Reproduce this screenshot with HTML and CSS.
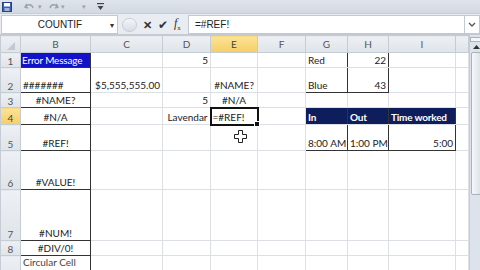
FILE: index.html
```html
<!DOCTYPE html>
<html lang="en">
<head>
    <meta charset="UTF-8">
    <title>Error values</title>
    <link rel="stylesheet" href="styles.css">
</head>
<body>
    <div class="qat">
        <svg class="qicon" width="10" height="10" viewBox="0 0 10 10">
            <rect x="0.5" y="0.5" width="9" height="9" fill="#3a5fb0" stroke="#23408a"/>
            <rect x="2" y="1" width="6" height="3.5" fill="#fff"/>
            <rect x="2.5" y="6" width="5" height="3" fill="#9fb3dc"/>
        </svg>
        <span class="qsep"></span>
        <svg class="qicon dim" width="12" height="10" viewBox="0 0 12 10">
            <path d="M3 2 L1 5 L4 6 M1.5 5 C3 2 8 1.5 9 6" fill="none" stroke="#9aa3ad" stroke-width="1.4"/>
        </svg>
        <span class="qdrop">▾</span>
        <svg class="qicon dim" width="12" height="10" viewBox="0 0 12 10">
            <path d="M9 2 L11 5 L8 6 M10.5 5 C9 2 4 1.5 3 6" fill="none" stroke="#9aa3ad" stroke-width="1.4"/>
        </svg>
        <span class="qdrop">▾</span>
        <span class="qgap"></span>
        <span class="qdrop">▾</span>
        <span class="qcust">
            <svg width="7" height="8" viewBox="0 0 7 8">
                <rect x="0" y="0" width="7" height="1.2" fill="#444"/>
                <path d="M0.5 3 L6.5 3 L3.5 7 Z" fill="#444"/>
            </svg>
        </span>
    </div>

    <div class="fbar">
        <div class="namebox">
            <span class="name">COUNTIF</span>
            <span class="nb-arrow">▾</span>
        </div>
        <div class="fx-tools">
            <span class="grip"></span>
            <span class="tool">✕</span>
            <span class="tool check">✔</span>
            <span class="tool fx"><i>f</i><sub>x</sub></span>
        </div>
        <div class="formula">=#REF!</div>
        <div class="expand">
            <svg width="8" height="6" viewBox="0 0 8 6">
                <path d="M1 1 L4 4 L7 1" fill="none" stroke="#555" stroke-width="1.3"/>
            </svg>
        </div>
    </div>

    <div class="sheet-wrap">
        <table class="sheet">
            <colgroup>
                <col class="c-hdr">
                <col class="c-b">
                <col class="c-c">
                <col class="c-d">
                <col class="c-e">
                <col class="c-f">
                <col class="c-g">
                <col class="c-h">
                <col class="c-i">
                <col class="c-j">
            </colgroup>
            <tr class="r-hdr">
                <th class="corner"><span class="tri"></span></th>
                <th>B</th><th>C</th><th>D</th><th class="active">E</th><th>F</th><th>G</th><th>H</th><th>I</th><th></th>
            </tr>
            <tr class="r1">
                <th>1</th>
                <td class="bx mid title">Error Message</td>
                <td></td>
                <td class="num">5</td>
                <td></td><td></td>
                <td class="tb-l">Red</td>
                <td class="tb-r num">22</td>
                <td></td><td></td>
            </tr>
            <tr class="r2">
                <th>2</th>
                <td class="bx">#######</td>
                <td class="num">$5,555,555.00</td>
                <td></td>
                <td class="ctr">#NAME?</td>
                <td></td>
                <td class="tb-l tb-b">Blue</td>
                <td class="tb-r tb-b num">43</td>
                <td></td><td></td>
            </tr>
            <tr class="r3">
                <th>3</th>
                <td class="bx ctr">#NAME?</td>
                <td></td>
                <td class="num">5</td>
                <td class="ctr">#N/A</td>
                <td></td><td></td><td></td><td></td><td></td>
            </tr>
            <tr class="r4">
                <th class="active">4</th>
                <td class="bx ctr">#N/A</td>
                <td></td>
                <td class="num">Lavendar</td>
                <td class="sel">=#REF!<span class="handle"></span></td>
                <td></td>
                <td class="navy tb-l">In</td>
                <td class="navy tb-r">Out</td>
                <td class="navy tb-r">Time worked</td>
                <td></td>
            </tr>
            <tr class="r5">
                <th>5</th>
                <td class="bx ctr">#REF!</td>
                <td></td><td></td><td></td><td></td>
                <td class="tb-l tb-b">8:00 AM</td>
                <td class="tb-r tb-b">1:00 PM</td>
                <td class="tb-r tb-b num">5:00</td>
                <td></td>
            </tr>
            <tr class="r6">
                <th>6</th>
                <td class="bx ctr">#VALUE!</td>
                <td></td><td></td><td></td><td></td><td></td><td></td><td></td><td></td>
            </tr>
            <tr class="r7">
                <th>7</th>
                <td class="bx ctr">#NUM!</td>
                <td></td><td></td><td></td><td></td><td></td><td></td><td></td><td></td>
            </tr>
            <tr class="r8">
                <th>8</th>
                <td class="bx ctr">#DIV/0!</td>
                <td></td><td></td><td></td><td></td><td></td><td></td><td></td><td></td>
            </tr>
            <tr class="r9">
                <th>9</th>
                <td class="bx wrap">Circular Cell Reference</td>
                <td></td><td></td><td></td><td></td><td></td><td></td><td></td><td></td>
            </tr>
        </table>

        <div class="vscroll">
            <div class="split"></div>
            <div class="arrow-up">
                <svg width="7" height="4" viewBox="0 0 7 4"><path d="M0 4 L3.5 0 L7 4 Z" fill="#333"/></svg>
            </div>
            <div class="thumb"></div>
        </div>

        <svg class="cursor" width="13" height="13" viewBox="0 0 13 13">
            <path d="M4.5 0.5 H8.5 V4.5 H12.5 V8.5 H8.5 V12.5 H4.5 V8.5 H0.5 V4.5 H4.5 Z" fill="#fff" stroke="#222" stroke-width="1"/>
        </svg>
    </div>
</body>
</html>
```

FILE: styles.css
```css
body {
    margin: 0;
    width: 480px;
    height: 270px;
    overflow: hidden;
    background-color: #e9edf2;
    font-family: Lato, "Liberation Sans", sans-serif;
    font-size: 10px;
    color: #222;
}
.qat {
    height: 13px;
    display: flex;
    align-items: center;
    padding-left: 2px;
    background: linear-gradient(#dfe4eb, #d3d9e2);
    border-bottom: 1px solid #c7ced8;
}
.qicon {
    display: block;
}
.qsep {
    width: 12px;
}
.qdrop {
    font-size: 7px;
    color: #9aa3ad;
    margin: 0 5px 0 2px;
}
.qgap {
    width: 10px;
}
.qcust {
    margin-left: 6px;
    display: flex;
}
.fbar {
    height: 19px;
    margin-top: 1px;
    display: flex;
    align-items: stretch;
    background-color: #e9edf2;
    border-bottom: 1px solid #c2c9d3;
}
.namebox {
    width: 117px;
    margin-left: 1px;
    background-color: #fff;
    border: 1px solid #c2c9d3;
    display: flex;
    align-items: center;
    box-sizing: border-box;
}
.name {
    flex: 1;
    text-align: center;
    font-family: "Liberation Sans", sans-serif;
    font-size: 10px;
    padding-left: 8px;
}
.nb-arrow {
    font-size: 8px;
    color: #333;
    padding-right: 3px;
}
.fx-tools {
    width: 66px;
    display: flex;
    align-items: center;
    padding-left: 4px;
    gap: 6px;
}
.grip {
    width: 15px;
    height: 14px;
    border-radius: 7px;
    background: linear-gradient(#f3f5f8, #d7dde5);
    border: 1px solid #c8ced7;
    box-sizing: border-box;
}
.tool {
    font-size: 11px;
    font-weight: bold;
    color: #333;
    line-height: 1;
}
.check {
    font-size: 12px;
    font-weight: normal;
}
.fx {
    font-family: "Liberation Serif", serif;
    font-size: 12px;
    font-weight: normal;
}
.fx sub {
    font-size: 7px;
}
.formula {
    flex: 1;
    background-color: #fff;
    border: 1px solid #c2c9d3;
    border-right: none;
    display: flex;
    align-items: center;
    padding-left: 6px;
    font-family: "Liberation Sans", sans-serif;
    font-size: 10px;
}
.expand {
    width: 14px;
    background-color: #fff;
    border: 1px solid #c2c9d3;
    display: flex;
    align-items: center;
    justify-content: center;
}
.sheet-wrap {
    position: relative;
    display: flex;
    background-color: #fff;
}
.sheet {
    width: 468px;
    table-layout: fixed;
    border-collapse: collapse;
    background-color: #fff;
}
.c-hdr { width: 20px; }
.c-b { width: 70px; }
.c-c { width: 72px; }
.c-d { width: 48px; }
.c-e { width: 47px; }
.c-f { width: 48px; }
.c-g { width: 42px; }
.c-h { width: 41px; }
.c-i { width: 67px; }
.c-j { width: 13px; }
th {
    background: linear-gradient(#edf0f4, #dfe4ea);
    border: 1px solid #c6ccd4;
    font-weight: normal;
    color: #555;
    font-size: 10px;
    padding: 0;
    text-align: center;
    vertical-align: bottom;
}
.r-hdr th {
    vertical-align: middle;
}
th.active {
    background: linear-gradient(#fbe39a, #f6cf62);
    color: #444;
}
.tri {
    display: block;
    width: 0;
    height: 0;
    margin: 4px 0 0 6px;
    border-left: 8px solid transparent;
    border-bottom: 8px solid #c3c9d1;
}
td {
    border: 1px solid #dcdfe3;
    padding: 0 2px;
    white-space: nowrap;
    overflow: visible;
    vertical-align: bottom;
    line-height: 13px;
}
.r-hdr { height: 17px; }
.r1 { height: 15px; }
.r2 { height: 25px; }
.r3 { height: 15px; }
.r4 { height: 17px; }
.r5 { height: 26px; }
.r6 { height: 39px; }
.r7 { height: 51px; }
.r8 { height: 15px; }
.r9 { height: 30px; }
.num {
    text-align: right;
}
.ctr {
    text-align: center;
}
.mid {
    vertical-align: middle;
}
.bx {
    border: 1px solid #333;
    border-left-color: #c6ccd4;
}
.title {
    background-color: #1212c9;
    color: #fff;
    padding-left: 1px;
    font-size: 10px;
    letter-spacing: -0.2px;
}
.wrap {
    white-space: normal;
    vertical-align: top;
    line-height: 12px;
    color: #444;
}
.tb-l {
    border-left: 1px solid #333;
    border-right: 1px solid #333;
}
.tb-r {
    border-right: 1px solid #333;
}
.tb-b {
    border-bottom: 1px solid #333;
}
.navy {
    background-color: #0e1d5c;
    color: #fff;
    font-weight: bold;
    letter-spacing: -0.2px;
    border-top: 1px solid #0e1d5c;
}
.sel {
    position: relative;
    border: 2px solid #111;
    padding-left: 1px;
}
.handle {
    position: absolute;
    right: -3px;
    bottom: -3px;
    width: 4px;
    height: 4px;
    background-color: #111;
    border: 1px solid #fff;
}
.vscroll {
    width: 12px;
    background-color: #dde3ea;
    border-left: 1px solid #c6ccd4;
    display: flex;
    flex-direction: column;
    align-items: center;
}
.split {
    width: 10px;
    height: 3px;
    margin-top: 2px;
    background-color: #f4f6f8;
    border: 1px solid #aab2bc;
}
.arrow-up {
    height: 10px;
    display: flex;
    align-items: center;
}
.thumb {
    width: 10px;
    height: 143px;
    background: linear-gradient(90deg, #f6f8fa, #dde3ea);
    border: 1px solid #a9b1bb;
    border-radius: 2px;
    box-sizing: border-box;
}
.cursor {
    position: absolute;
    left: 234px;
    top: 95px;
}
```
